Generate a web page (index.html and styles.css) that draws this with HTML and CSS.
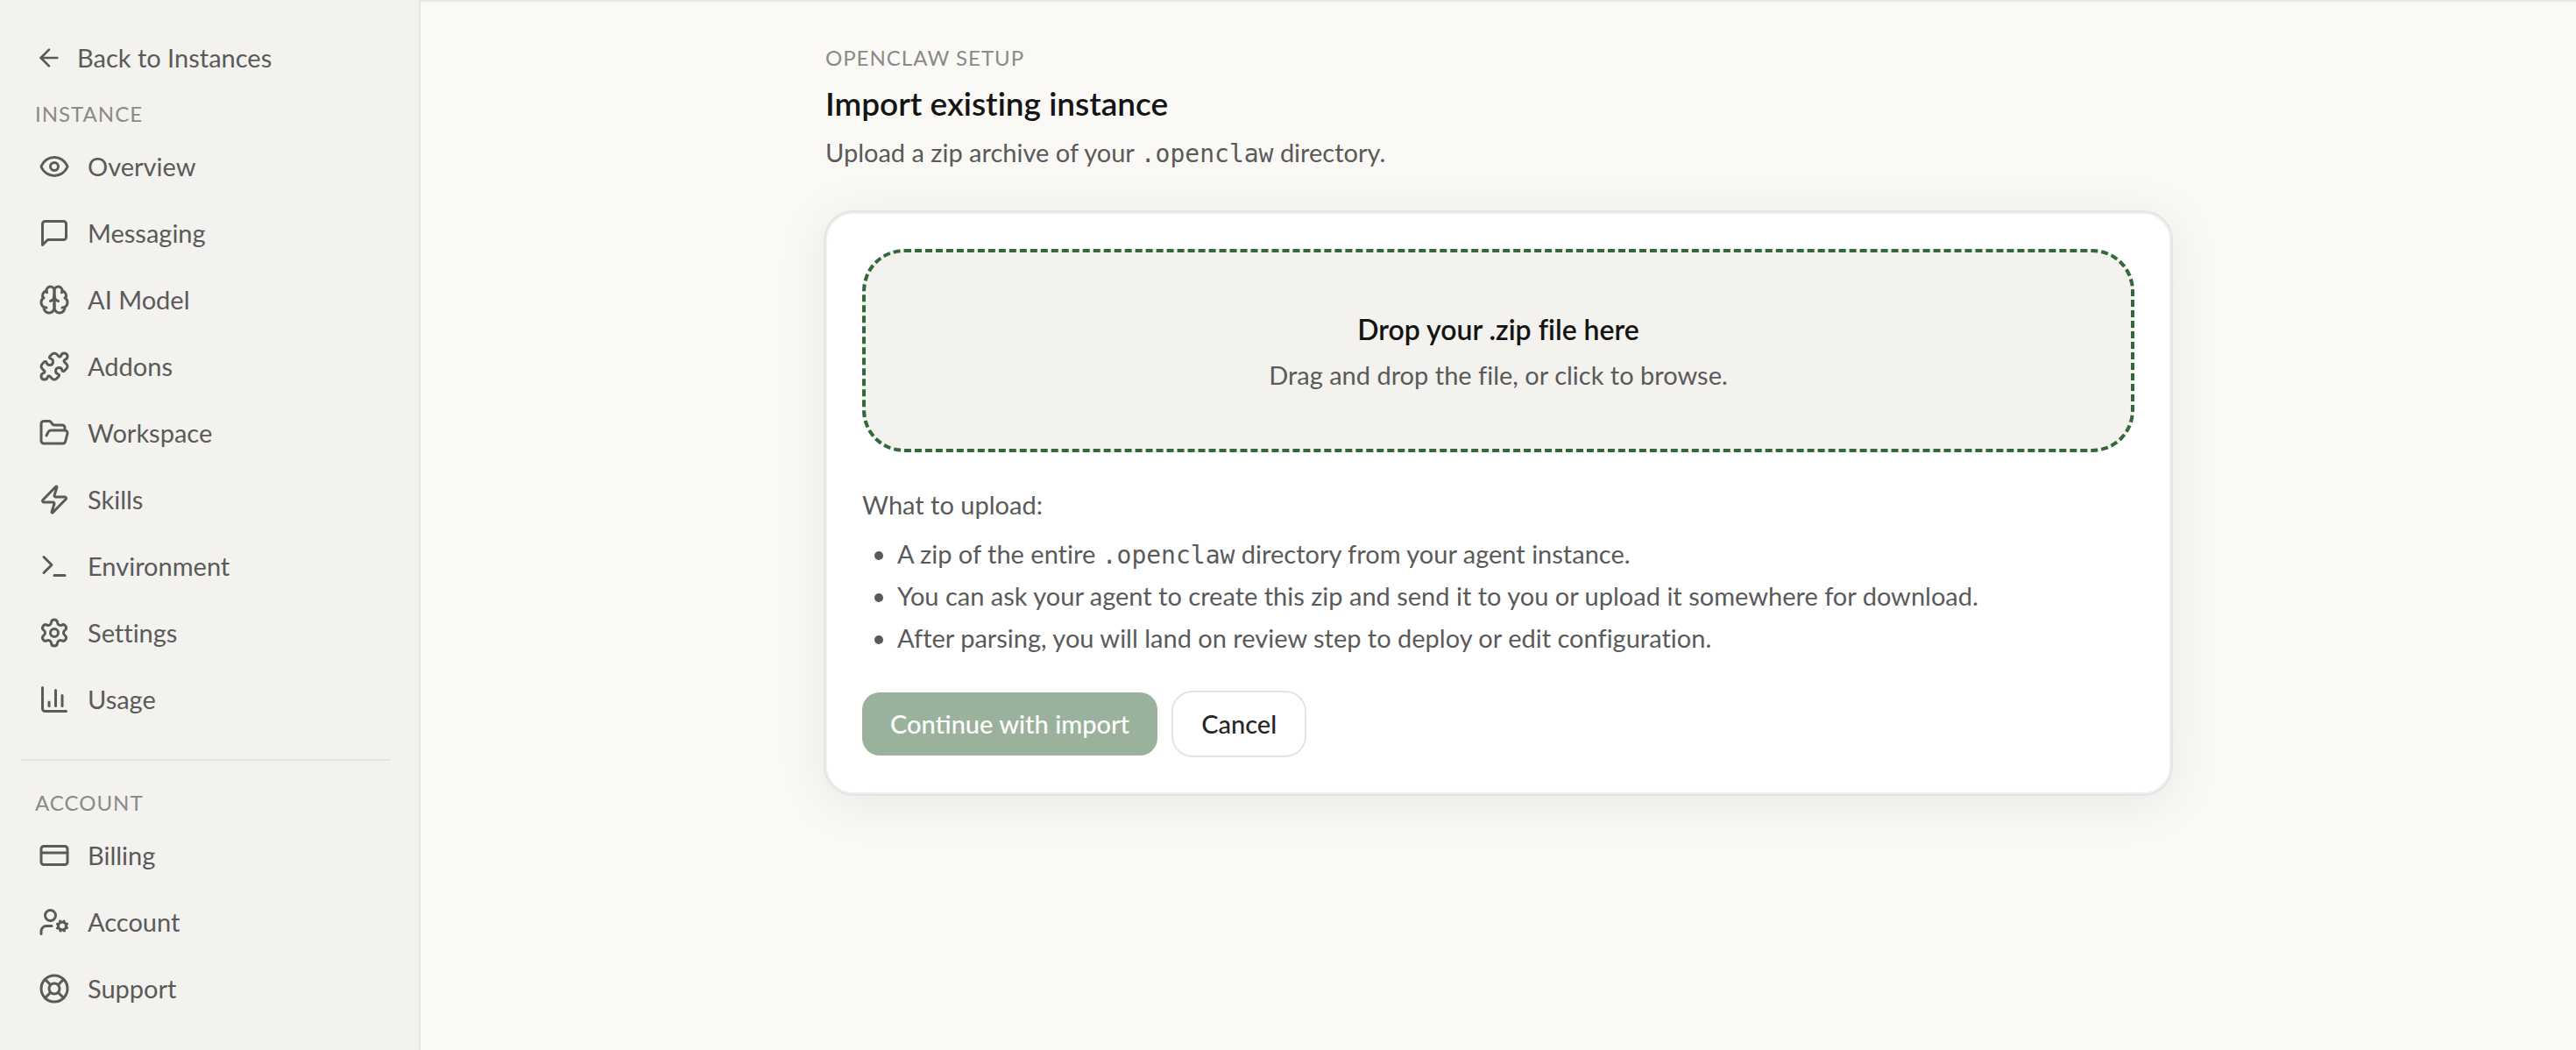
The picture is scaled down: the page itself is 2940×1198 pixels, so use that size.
FILE: index.html
```html
<!DOCTYPE html>
<html lang="en">
<head>
    <meta charset="UTF-8">
    <meta name="viewport" content="width=device-width, initial-scale=1.0">
    <title>Import existing instance</title>
    <link rel="stylesheet" href="styles.css">
</head>
<body>
    <div class="layout">
        <aside class="sidebar">
            <a class="back" href="#">
                <svg class="icon" viewBox="0 0 24 24"><path d="m12 19-7-7 7-7"/><path d="M19 12H5"/></svg>
                Back to Instances
            </a>
            <h2 class="label">Instance</h2>
            <nav class="nav" aria-label="Instance">
                <a class="nav-item" href="#">
                    <svg class="icon" viewBox="0 0 24 24"><path d="M2.062 12.348a1 1 0 0 1 0-.696 10.75 10.75 0 0 1 19.876 0 1 1 0 0 1 0 .696 10.75 10.75 0 0 1-19.876 0"/><circle cx="12" cy="12" r="3"/></svg>
                    Overview
                </a>
                <a class="nav-item" href="#">
                    <svg class="icon" viewBox="0 0 24 24"><path d="M21 15a2 2 0 0 1-2 2H7l-4 4V5a2 2 0 0 1 2-2h14a2 2 0 0 1 2 2z"/></svg>
                    Messaging
                </a>
                <a class="nav-item" href="#">
                    <svg class="icon" viewBox="0 0 24 24"><path d="M12 5a3 3 0 1 0-5.997.125 4 4 0 0 0-2.526 5.77 4 4 0 0 0 .556 6.588A4 4 0 1 0 12 18Z"/><path d="M12 5a3 3 0 1 1 5.997.125 4 4 0 0 1 2.526 5.77 4 4 0 0 1-.556 6.588A4 4 0 1 1 12 18Z"/><path d="M15 13a4.5 4.5 0 0 1-3-4 4.5 4.5 0 0 1-3 4"/><path d="M17.599 6.5a3 3 0 0 0 .399-1.375"/><path d="M6.003 5.125A3 3 0 0 0 6.401 6.5"/><path d="M3.477 10.896a4 4 0 0 1 .585-.396"/><path d="M19.938 10.5a4 4 0 0 1 .585.396"/><path d="M6 18a4 4 0 0 1-1.967-.516"/><path d="M19.967 17.484A4 4 0 0 1 18 18"/></svg>
                    AI Model
                </a>
                <a class="nav-item" href="#">
                    <svg class="icon" viewBox="0 0 24 24"><path d="M15.39 4.39a1 1 0 0 0 1.68-.474 2.5 2.5 0 1 1 3.014 3.015 1 1 0 0 0-.474 1.68l1.683 1.682a2.414 2.414 0 0 1 0 3.414L19.61 15.39a1 1 0 0 1-1.68-.474 2.5 2.5 0 1 0-3.014 3.015 1 1 0 0 1 .474 1.68l-1.683 1.682a2.414 2.414 0 0 1-3.414 0L8.61 19.61a1 1 0 0 0-1.68.474 2.5 2.5 0 1 1-3.014-3.015 1 1 0 0 0 .474-1.68l-1.683-1.682a2.414 2.414 0 0 1 0-3.414L4.39 8.61a1 1 0 0 1 1.68.474 2.5 2.5 0 1 0 3.014-3.015 1 1 0 0 1-.474-1.68l1.683-1.682a2.414 2.414 0 0 1 3.414 0z"/></svg>
                    Addons
                </a>
                <a class="nav-item" href="#">
                    <svg class="icon" viewBox="0 0 24 24"><path d="m6 14 1.5-2.9A2 2 0 0 1 9.24 10H20a2 2 0 0 1 1.94 2.5l-1.54 6a2 2 0 0 1-1.95 1.5H4a2 2 0 0 1-2-2V5a2 2 0 0 1 2-2h3.9a2 2 0 0 1 1.69.9l.81 1.2a2 2 0 0 0 1.67.9H18a2 2 0 0 1 2 2v2"/></svg>
                    Workspace
                </a>
                <a class="nav-item" href="#">
                    <svg class="icon" viewBox="0 0 24 24"><path d="M4 14a1 1 0 0 1-.78-1.63l9.9-10.2a.5.5 0 0 1 .86.46l-1.92 6.02A1 1 0 0 0 13 10h7a1 1 0 0 1 .78 1.63l-9.9 10.2a.5.5 0 0 1-.86-.46l1.92-6.02A1 1 0 0 0 11 14z"/></svg>
                    Skills
                </a>
                <a class="nav-item" href="#">
                    <svg class="icon" viewBox="0 0 24 24"><path d="m4 17 6-6-6-6"/><path d="M12 19h8"/></svg>
                    Environment
                </a>
                <a class="nav-item" href="#">
                    <svg class="icon" viewBox="0 0 24 24"><path d="M9.671 4.136a2.34 2.34 0 0 1 4.659 0 2.34 2.34 0 0 0 3.319 1.915 2.34 2.34 0 0 1 2.33 4.033 2.34 2.34 0 0 0 0 3.831 2.34 2.34 0 0 1-2.33 4.033 2.34 2.34 0 0 0-3.319 1.915 2.34 2.34 0 0 1-4.659 0 2.34 2.34 0 0 0-3.32-1.915 2.34 2.34 0 0 1-2.33-4.033 2.34 2.34 0 0 0 0-3.831A2.34 2.34 0 0 1 6.35 6.051a2.34 2.34 0 0 0 3.319-1.915"/><circle cx="12" cy="12" r="3"/></svg>
                    Settings
                </a>
                <a class="nav-item" href="#">
                    <svg class="icon" viewBox="0 0 24 24"><path d="M3 3v16a2 2 0 0 0 2 2h16"/><path d="M13 17V5"/><path d="M18 17V9"/><path d="M8 17v-3"/></svg>
                    Usage
                </a>
            </nav>
            <hr class="divider">
            <h2 class="label">Account</h2>
            <nav class="nav" aria-label="Account">
                <a class="nav-item" href="#">
                    <svg class="icon" viewBox="0 0 24 24"><rect width="20" height="14" x="2" y="5" rx="2"/><path d="M2 10h20"/></svg>
                    Billing
                </a>
                <a class="nav-item" href="#">
                    <svg class="icon" viewBox="0 0 24 24"><circle cx="9" cy="7" r="4"/><path d="M10 15H6a4 4 0 0 0-4 4v2"/><circle cx="18" cy="15" r="3"/><path d="m21.7 16.4-.9-.3"/><path d="m15.2 13.9-.9-.3"/><path d="m16.6 18.7.3-.9"/><path d="m19.1 12.2.3-.9"/><path d="m19.6 18.7-.4-1"/><path d="m16.8 12.3-.4-1"/><path d="m14.3 16.6 1-.4"/><path d="m20.7 13.8 1-.4"/></svg>
                    Account
                </a>
                <a class="nav-item" href="#">
                    <svg class="icon" viewBox="0 0 24 24"><circle cx="12" cy="12" r="10"/><path d="m4.93 4.93 4.24 4.24"/><path d="m14.83 9.17 4.24-4.24"/><path d="m14.83 14.83 4.24 4.24"/><path d="m9.17 14.83-4.24 4.24"/><circle cx="12" cy="12" r="4"/></svg>
                    Support
                </a>
            </nav>
        </aside>
        <main class="main">
            <div class="content">
                <p class="eyebrow">OpenClaw setup</p>
                <h1 class="title">Import existing instance</h1>
                <p class="subtitle">Upload a zip archive of your <code>.openclaw</code> directory.</p>
                <form class="card">
                    <label class="dropzone">
                        <input class="file-input" type="file" accept=".zip">
                        <span class="drop-title">Drop your .zip file here</span>
                        <span>Drag and drop the file, or click to browse.</span>
                    </label>
                    <div class="help">
                        <p>What to upload:</p>
                        <ul>
                            <li>A zip of the entire <code>.openclaw</code> directory from your agent instance.</li>
                            <li>You can ask your agent to create this zip and send it to you or upload it somewhere for download.</li>
                            <li>After parsing, you will land on review step to deploy or edit configuration.</li>
                        </ul>
                    </div>
                    <div class="actions">
                        <button class="btn btn-primary" type="submit" disabled>Continue with import</button>
                        <button class="btn btn-secondary" type="button">Cancel</button>
                    </div>
                </form>
            </div>
        </main>
    </div>
</body>
</html>
```
FILE: styles.css
```css
*{
    box-sizing: border-box;
}
body{
    margin: 0;
    background-color: #faf9f5;
    color: #5a5a5a;
    font-family: Lato, "Open Sans", sans-serif;
    font-size: 29px;
    font-variant-ligatures: none;
    line-height: 40px;
}
h1, h2, p, ul{
    margin: 0;
}
code{
    font-family: "DejaVu Sans Mono", monospace;
    font-size: 28px;
    line-height: 1;
}
.layout{
    display: flex;
    min-height: 100vh;
}

/* sidebar */
.sidebar{
    flex: 0 0 480px;
    padding: 36px 32px 32px 24px;
    background-color: #f3f2ee;
    border-right: 2px solid #e6e5e1;
}
.icon{
    flex: none;
    width: 36px;
    height: 36px;
    fill: none;
    stroke: currentColor;
    stroke-width: 2;
    stroke-linecap: round;
    stroke-linejoin: round;
}
.back, .nav-item{
    display: flex;
    align-items: center;
    color: inherit;
    text-decoration: none;
}
.back{
    gap: 16px;
    height: 60px;
    padding: 0 16px;
}
.back .icon{
    width: 32px;
    height: 32px;
}
.label, .eyebrow{
    color: #8a8a8a;
    font-size: 24px;
    font-weight: 400;
    line-height: 32px;
    letter-spacing: 1px;
    text-transform: uppercase;
}
.label{
    padding: 0 16px;
    margin: 18px 0 8px;
}
.nav{
    display: flex;
    flex-direction: column;
    gap: 4px;
}
.nav-item{
    gap: 20px;
    height: 72px;
    padding: 0 20px;
}
.divider{
    height: 2px;
    margin: 32px 0;
    border: none;
    background-color: #e6e5e1;
}

/* page */
.main{
    flex: 1;
    min-width: 0;
    padding: 48px 32px;
    border-top: 2px solid #e9e8e5;
}
.content{
    max-width: 1536px;
    margin: 0 auto;
}
.title{
    margin: 8px 0;
    color: #141414;
    font-size: 37px;
    font-weight: 600;
    line-height: 56px;
}
.card{
    margin-top: 48px;
    padding: 40px;
    background-color: #fff;
    border: 2px solid #efefef;
    border-radius: 32px;
    box-shadow: 0 0 0 2px #e4e4e1, 0 8px 60px rgba(20, 20, 0, 0.08);
}
.dropzone{
    display: flex;
    flex-direction: column;
    align-items: center;
    gap: 8px;
    padding: 64px 32px;
    background-color: #f3f2ee;
    border: 4px dashed #33693a;
    border-radius: 48px;
    text-align: center;
    cursor: pointer;
}
.file-input{
    position: absolute;
    width: 1px;
    height: 1px;
    opacity: 0;
}
.drop-title{
    color: #141414;
    font-size: 32px;
    font-weight: 600;
    line-height: 48px;
}
.help{
    margin: 40px 0 36px;
}
.help ul{
    margin-top: 12px;
    padding-left: 40px;
    line-height: 48px;
}
.actions{
    display: flex;
    align-items: center;
    gap: 16px;
}
.btn{
    padding: 16px 32px;
    border: none;
    border-radius: 20px;
    font-family: inherit;
    font-size: 29px;
    font-weight: 500;
    line-height: 40px;
}
.btn-primary{
    background-color: #9ab29c;
    color: #fff;
}
.btn-secondary{
    border: 2px solid #e4e4e4;
    border-radius: 24px;
    background-color: #fff;
    color: #262626;
    cursor: pointer;
}
```
